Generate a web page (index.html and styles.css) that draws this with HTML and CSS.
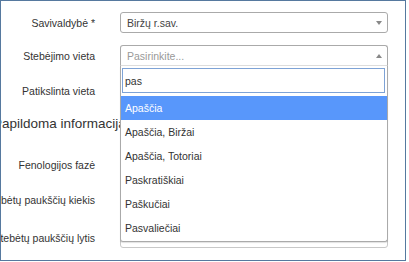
FILE: index.html
```html
<!DOCTYPE html>
<html lang="lt">
<head>
  <meta charset="UTF-8">
  <title>Stebėjimo forma</title>
  <link rel="stylesheet" href="styles.css">
</head>
<body>

<div class="frame">
  <form class="form">

    <!-- vieta -->
    <div class="row">
      <label class="label">Savivaldybė *</label>
      <div class="control">
        <div class="select">
          <span class="select-value">Biržų r.sav.</span>
          <span class="caret"></span>
        </div>
      </div>
    </div>

    <div class="row">
      <label class="label">Stebėjimo vieta</label>
      <div class="control">
        <div class="select select-open">
          <span class="select-placeholder">Pasirinkite...</span>
          <span class="caret caret-up"></span>
        </div>
        <div class="dropdown">
          <div class="dropdown-search">
            <input class="search-field" type="text" value="pas">
          </div>
          <ul class="results">
            <li class="option option-active">Apaščia</li>
            <li class="option">Apaščia, Biržai</li>
            <li class="option">Apaščia, Totoriai</li>
            <li class="option">Paskratiškiai</li>
            <li class="option">Paškučiai</li>
            <li class="option">Pasvaliečiai</li>
          </ul>
        </div>
      </div>
    </div>

    <div class="row row-tall">
      <label class="label">Patikslinta vieta</label>
      <div class="control"><input class="input" type="text"></div>
    </div>

    <!-- papildoma informacija -->
    <h4 class="section-title">Papildoma informacija</h4>

    <div class="row">
      <label class="label">Fenologijos fazė</label>
      <div class="control">
        <div class="select"><span class="select-value"></span><span class="caret"></span></div>
      </div>
    </div>

    <div class="row row-tall row-gap">
      <label class="label">Stebėtų paukščių kiekis</label>
      <div class="control"><input class="input" type="text"></div>
    </div>

    <div class="row">
      <label class="label">Stebėtų paukščių lytis</label>
      <div class="control">
        <div class="select select-plain"><span class="select-value"></span><span class="caret"></span></div>
      </div>
    </div>

  </form>
</div>

</body>
</html>
```

FILE: styles.css
```css
body{margin:0;background:#fff;font-family:"Liberation Sans",Arial,sans-serif;font-size:10.5px;color:#333}
.frame{width:404px;height:259px;border:1px solid #56799f;overflow:hidden;background:#fff}
.form{margin:0;padding-top:11px}

.row{display:flex;align-items:center;gap:25px;height:21px;margin-bottom:12px}
.row-tall{height:25px;margin-bottom:11px}
.row-gap{margin-bottom:15px}
.label{width:94px;flex-shrink:0;display:flex;justify-content:flex-end;white-space:nowrap;color:#333}
.control{position:relative;width:268px;height:100%}

.select{box-sizing:border-box;height:100%;display:flex;align-items:center;justify-content:space-between;padding:0 5px 0 6px;border:1px solid #aaa;border-radius:3px;background:#fff}
.select-open{border-radius:3px 3px 0 0;border-bottom-color:#ddd}
.select-plain{border-color:#c8c8c8}
.select-value{color:#444}
.select-placeholder{color:#999}
.caret{width:0;height:0;border-left:3px solid transparent;border-right:3px solid transparent;border-top:4px solid #888}
.caret-up{border-top:0;border-bottom:4px solid #888}

.input{box-sizing:border-box;display:block;width:100%;height:100%;border:1px solid #ccc;border-radius:3px;font:inherit}

.section-title{margin:0 0 20px -8px;font-size:13.5px;font-weight:normal;line-height:20px;color:#333;white-space:nowrap}

/* išskleistas sąrašas */
.dropdown{position:absolute;top:100%;left:0;right:0;z-index:10;background:#fff;border:1px solid #aaa;border-top:0;border-radius:0 0 3px 3px;box-shadow:0 1px 1px rgba(0,0,0,.12)}
.dropdown-search{padding:2px 2px 3px 1px}
.search-field{box-sizing:border-box;display:block;width:100%;height:25px;margin:0;padding:0 2px;border:1px solid #7ea3d6;font:inherit;color:#333;outline:none}
.results{list-style:none;margin:0 0 1px;padding:0}
.option{height:24px;line-height:24px;padding:0 4px;color:#333}
.option-active{background:#5897fb;color:#fff}
```
